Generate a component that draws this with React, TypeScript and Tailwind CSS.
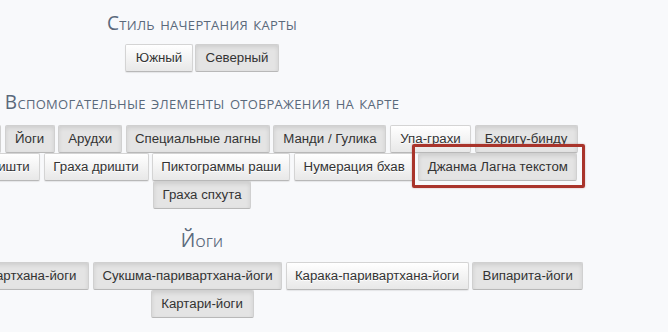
import React from "react";

type Btn = { label: string; on?: boolean; w: string; mark?: boolean };

const base =
    "relative inline-flex shrink-0 items-center justify-center h-[28px] px-[8px] border rounded-[2px] text-[13.25px] leading-[20px] text-[#333] whitespace-nowrap";
const offCls =
    "bg-linear-to-b from-white to-[#e8e8e8] border-[#d4d4d4] border-b-[#b8b8b8] shadow-[0_1px_1px_rgba(0,0,0,0.08)] [text-shadow:0_1px_0_#fff]";
const onCls =
    "bg-[#e4e4e4] border-[#d0d0d0] border-b-[#b8b8b8] shadow-[inset_0_2px_4px_rgba(0,0,0,0.1)]";

const Button = ({ b }: { b: Btn }) => (
    <span className={`${base} ${b.on ? onCls : offCls} ${b.w}`}>
        {b.label}
        {b.mark && (
            <span className="pointer-events-none absolute -left-[7px] -right-[9px] -top-[10px] -bottom-[8px] border-[3px] border-[#a9342b] rounded-[2px] shadow-[0_0_2px_rgba(120,20,20,0.35)]" />
        )}
    </span>
);

const Row = ({ items, gap = "gap-[3.6px]" }: { items: Btn[]; gap?: string }) => (
    <div className={`flex shrink-0 ${gap}`}>
        {items.map((b) => (
            <Button key={b.label} b={b} />
        ))}
    </div>
);

const Heading = ({ children, className }: { children: React.ReactNode; className?: string }) => (
    <h2
        className={`text-[19.05px] leading-[24px] tracking-[0.3px] text-[#5a697b] [font-variant:small-caps] whitespace-nowrap ${className ?? ""}`}
        style={{ fontFamily: '"Open Sans", "Noto Sans", sans-serif' }}
    >
        {children}
    </h2>
);

const styleRow: Btn[] = [
    { label: "Южный", w: "w-[68px]" },
    { label: "Северный", on: true, w: "w-[84px]" },
];

const aux1: Btn[] = [
    { label: "Дома", on: true, w: "w-[86px]" },
    { label: "Накшатры", on: true, w: "w-[85px]" },
    { label: "Йоги", on: true, w: "w-[50px]" },
    { label: "Арудхи", on: true, w: "w-[64px]" },
    { label: "Специальные лагны", on: true, w: "w-[144px]" },
    { label: "Манди / Гулика", on: true, w: "w-[113px]" },
    { label: "Упа-грахи", w: "w-[81px]" },
    { label: "Бхригу-бинду", on: true, w: "w-[103px]" },
];

const aux2: Btn[] = [
    { label: "Бхава чалит", w: "w-[105px]" },
    { label: "Раши дришти", w: "w-[104.6px]" },
    { label: "Граха дришти", w: "w-[105px]" },
    { label: "Пиктограммы раши", w: "w-[138px]" },
    { label: "Нумерация бхав", w: "w-[121px]" },
    { label: "Джанма Лагна текстом", on: true, mark: true, w: "w-[159px]" },
];

const aux3: Btn[] = [{ label: "Граха спхута", on: true, w: "w-[98px]" }];

const yoga1: Btn[] = [
    { label: "Раджа-йоги", on: true, w: "w-[120px]" },
    { label: "Паривартхана-йоги", on: true, w: "w-[145px]" },
    { label: "Сукшма-паривартхана-йоги", on: true, w: "w-[189px]" },
    { label: "Карака-паривартхана-йоги", w: "w-[183px]" },
    { label: "Випарита-йоги", on: true, w: "w-[111px]" },
];

const yoga2: Btn[] = [{ label: "Картари-йоги", on: true, w: "w-[103px]" }];

export default function App() {
    return (
        <div
            className="min-h-screen w-full bg-[#f8f9fb] overflow-hidden"
            style={{ fontFamily: '"Liberation Sans", Arial, sans-serif' }}
        >
            <div className="w-[404px] flex flex-col items-center pt-[11px]">
                <Heading>Стиль начертания карты</Heading>
                <div className="mt-[9px] flex flex-col items-center">
                    <Row items={styleRow} gap="gap-[2px]" />
                </div>

                <Heading className="mt-[18px]">Вспомогательные элементы отображения на карте</Heading>
                <div className="mt-[11px] flex flex-col items-center">
                    <Row items={aux1} />
                    <Row items={aux2} />
                    <Row items={aux3} />
                </div>

                <Heading className="mt-[19px]">Йоги</Heading>
                <div className="mt-[10px] flex flex-col items-center">
                    <Row items={yoga1} />
                    <Row items={yoga2} />
                </div>
            </div>
        </div>
    );
}
